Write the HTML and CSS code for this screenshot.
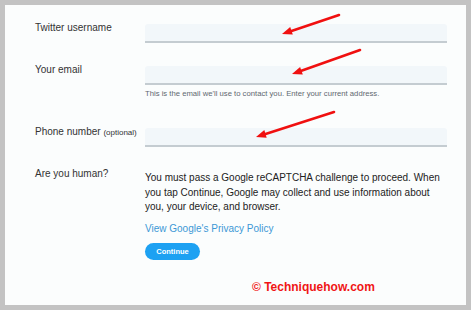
FILE: index.html
```html
<!DOCTYPE html>
<html lang="en">
<head>
    <meta charset="UTF-8">
    <title>Report an account</title>
    <link rel="stylesheet" href="styles.css">
</head>
<body>
    <div class="card">
        <div class="row first">
            <span class="label">Twitter username</span>
            <div class="field"><input type="text" class="input"></div>
        </div>

        <div class="row second">
            <span class="label">Your email</span>
            <div class="field">
                <input type="text" class="input">
                <p class="hint">This is the email we'll use to contact you. Enter your current address.</p>
            </div>
        </div>

        <div class="row third">
            <span class="label">Phone number <small>(optional)</small></span>
            <div class="field"><input type="text" class="input"></div>
        </div>

        <div class="row fourth">
            <span class="label">Are you human?</span>
            <div class="field">
                <p class="text">You must pass a Google reCAPTCHA challenge to proceed. When you tap Continue, Google may collect and use information about you, your device, and browser.</p>
                <a class="link">View Google's Privacy Policy</a>
                <button class="buttonContinue">Continue</button>
            </div>
        </div>

        <div class="mark">&copy; Techniquehow.com</div>
    </div>

    <!-- red arrows drawn over the screenshot -->
    <svg class="arrows" width="471" height="310" viewBox="0 0 471 310">
        <g stroke="#f01010" stroke-width="2.6" stroke-linecap="round">
            <line x1="339" y1="15" x2="290" y2="31.5"/>
            <line x1="360" y1="50" x2="300" y2="71.2"/>
            <line x1="334" y1="112" x2="264" y2="134.4"/>
        </g>
        <g fill="#f01010">
            <polygon points="282,34 292.8,34.6 290.2,27"/>
            <polygon points="292,74 302.8,74.4 300.1,66.9"/>
            <polygon points="256,137 266.7,137.7 264.3,130.1"/>
        </g>
    </svg>
</body>
</html>
```

FILE: styles.css
```css
*{
    margin: 0;
    box-sizing: border-box;
}

body{
    position: relative;
    background: #c3c3c3;
    font-family: "Liberation Sans", Arial, sans-serif;
    padding: 5px 5px 5px 5px;
    height: 310px;
}

.card{
    position: relative;
    height: 300px;
    background: #fbfdfd;
    padding: 14px 0 0 30px;
}

.row{
    display: grid;
    grid-template-columns: 110px 302px;
    align-items: start;
}

.second{ margin-top: 18px; }
.third{ margin-top: 24px; }
.fourth{ margin-top: 18px; }

.label{
    font-size: 10px;
    line-height: 14px;
    padding-top: 2px;
    color: #333;
}

.label small{
    font-size: 8px;
}

.input{
    display: block;
    width: 302px;
    height: 19px;
    margin-top: 5px;
    border: none;
    border-bottom: 2px solid #c4ccd1;
    border-radius: 3px 3px 0 0;
    background: #f2f7fa;
}

.hint{
    font-size: 7.7px;
    line-height: 10px;
    margin-top: 4px;
    color: #5f6870;
}

.text{
    font-size: 10px;
    line-height: 14.5px;
    margin-top: 6px;
    color: #222;
}

.link{
    display: block;
    font-size: 10px;
    line-height: 14px;
    margin-top: 7px;
    color: #3b98d6;
}

.buttonContinue{
    display: block;
    width: 55px;
    height: 17px;
    margin-top: 7px;
    border: none;
    border-radius: 9px;
    background: #1da1f2;
    color: #fff;
    font-family: "Liberation Sans", Arial, sans-serif;
    font-size: 7.5px;
    font-weight: bold;
    padding: 0;
}

.mark{
    position: absolute;
    left: 247px;
    top: 275px;
    font-size: 12px;
    font-weight: bold;
    color: #f01515;
}

.arrows{
    position: absolute;
    left: 0;
    top: 0;
}
```
